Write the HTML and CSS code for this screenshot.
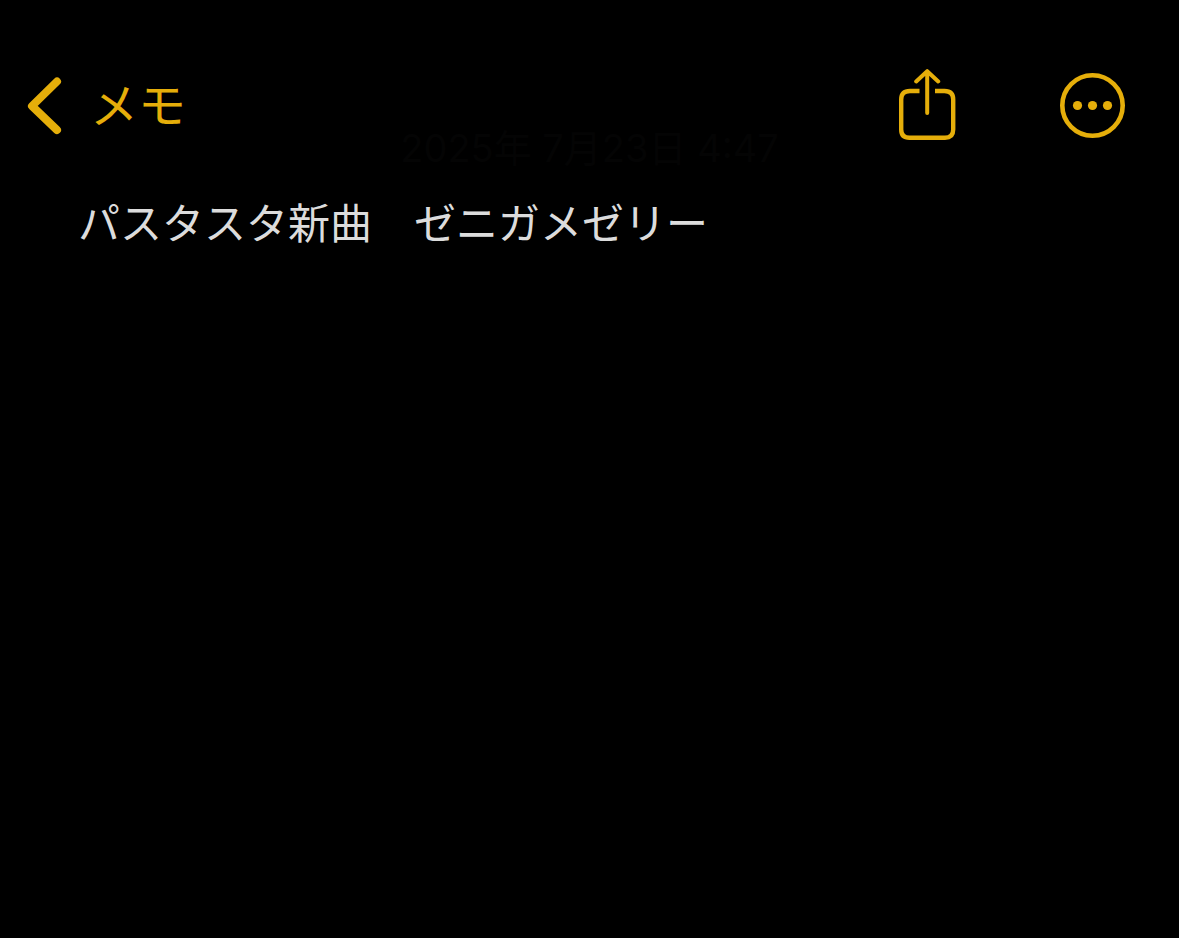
FILE: index.html
```html
<!DOCTYPE html>
<html lang="ja">
<head>
<meta charset="UTF-8">
<meta name="viewport" content="width=device-width, initial-scale=1.0">
<title>メモ</title>
<link rel="stylesheet" href="styles.css">
</head>
<body>

<header class="toolbar">
  <a class="back" href="#">
    <svg width="36" height="60" viewBox="0 0 36 60" aria-hidden="true">
      <path d="M31 5.5 L6 30 L31 54" stroke-width="8"/>
    </svg>
    <span>メモ</span>
  </a>
  <div class="actions">
    <button type="button" aria-label="共有">
      <svg width="58" height="74" viewBox="0 0 58 74" aria-hidden="true">
        <path class="box" d="M20.5 22 H11 Q2.2 22 2.2 30.500 V60.500 Q2.200 68.800 10.500 68.800 H46 Q54.200 68.800 54.200 60.500 V30.500 Q54.200 22 45.500 22 H36" stroke-width="4.400"/>
        <path d="M28.200 44 V3.500 M17.200 12.500 L28.200 2.200 L39.200 12.500" stroke-width="4"/>
      </svg>
    </button>
    <button type="button" aria-label="その他">
      <svg width="66" height="66" viewBox="0 0 66 66" aria-hidden="true">
        <circle cx="33.500" cy="32.500" r="30.200" stroke-width="4.600"/>
        <circle class="dot" cx="18.500" cy="32.500" r="4.600"/>
        <circle class="dot" cx="33.500" cy="32.500" r="4.600"/>
        <circle class="dot" cx="48.500" cy="32.500" r="4.600"/>
      </svg>
    </button>
  </div>
</header>

<main class="note">
  <time class="date" datetime="2025-07-23T04:47">2025年 7月23日 4:47</time>
  <p class="text">パスタスタ新曲　ゼニガメゼリー</p>
</main>

</body>
</html>
```

FILE: styles.css
```css
body {
  margin: 0;
  background-color: #000;
  color: #dcdcdc;
  font-family: Inter, "Noto Sans CJK JP", sans-serif;
}

.toolbar {
  display: flex;
  justify-content: space-between;
  align-items: center;
  height: 60px;
  padding: 76px 54px 0 26px;
  color: #e5ae0a;
}

.toolbar svg {
  display: block;
  fill: none;
  stroke: currentColor;
  stroke-linecap: round;
  stroke-linejoin: round;
}

.toolbar svg .box {
  stroke-linecap: butt;
}

.toolbar svg .dot {
  fill: currentColor;
  stroke: none;
}

.back {
  display: flex;
  align-items: center;
  gap: 28px;
  color: inherit;
  font-size: 48px;
  line-height: 60px;
  text-decoration: none;
}

.actions {
  display: flex;
  align-items: center;
  gap: 102px;
}

.actions button {
  padding: 0;
  border: none;
  background: none;
  color: inherit;
  cursor: pointer;
}

.note {
  padding: 0 78px;
}

.date {
  display: block;
  margin-top: -12px;
  color: #040404;
  font-size: 38px;
  line-height: 48px;
  text-align: center;
}

.text {
  margin: 22px 0 0;
  font-size: 42px;
  line-height: 60px;
}
```
